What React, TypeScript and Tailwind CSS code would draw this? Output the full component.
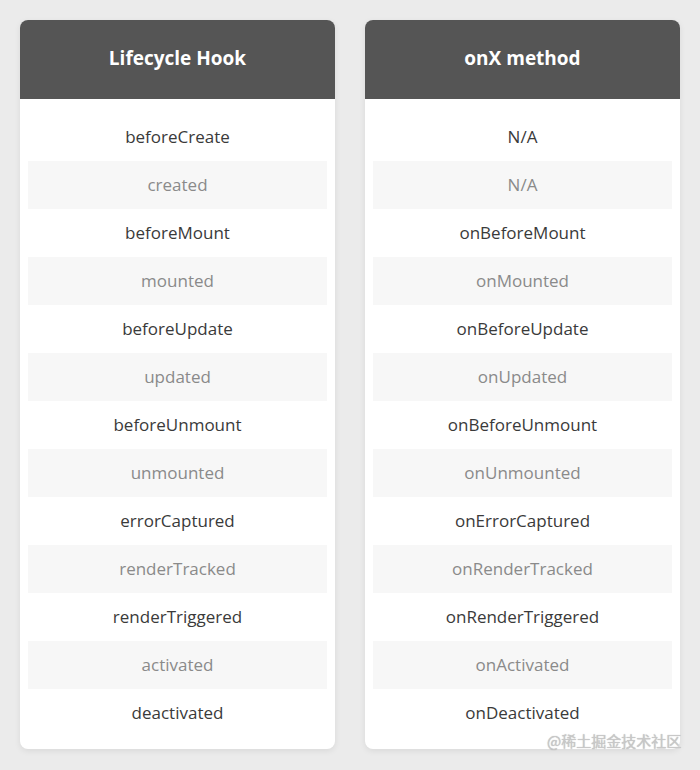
import React from "react";

const left = ["beforeCreate","created","beforeMount","mounted","beforeUpdate","updated","beforeUnmount","unmounted","errorCaptured","renderTracked","renderTriggered","activated","deactivated"];
const right = ["N/A","N/A","onBeforeMount","onMounted","onBeforeUpdate","onUpdated","onBeforeUnmount","onUnmounted","onErrorCaptured","onRenderTracked","onRenderTriggered","onActivated","onDeactivated"];

function Card({ title, items }: { title: string; items: string[] }) {
  return (
    <div className="w-[315px] rounded-lg bg-white shadow-[0_2px_6px_rgba(0,0,0,0.08)] overflow-hidden">
      <div className="h-[79px] pb-[2px] bg-[#555555] flex items-center justify-center text-white text-[19px] font-bold">{title}</div>
      <div className="pt-[14px] pb-[12px] px-2 flex flex-col">
        {items.map((t, i) => (
          <div
            key={i}
            className={
              i % 2 === 1
                ? "h-[48px] flex items-center justify-center bg-[#f7f7f7] text-[#8a8a8a] text-[17px]"
                : "h-[48px] flex items-center justify-center text-[#3a3a3a] text-[17px]"
            }
          >
            {t}
          </div>
        ))}
      </div>
    </div>
  );
}

export default function App() {
  return (
    <div className="w-[700px] h-[770px] bg-[#ebebeb] relative" style={{ fontFamily: '"Open Sans", "Noto Sans CJK SC", sans-serif' }}>
      <div className="flex gap-[30px] pt-5 pl-5">
        <Card title="Lifecycle Hook" items={left} />
        <Card title="onX method" items={right} />
      </div>
      <div className="absolute left-[547px] top-[730px] text-[15px] text-[#c8c8c8] [text-shadow:0_0_1px_rgba(0,0,0,0.3)]" style={{ fontFamily: '"Noto Sans CJK SC", sans-serif' }}>@稀土掘金技术社区</div>
    </div>
  );
}
